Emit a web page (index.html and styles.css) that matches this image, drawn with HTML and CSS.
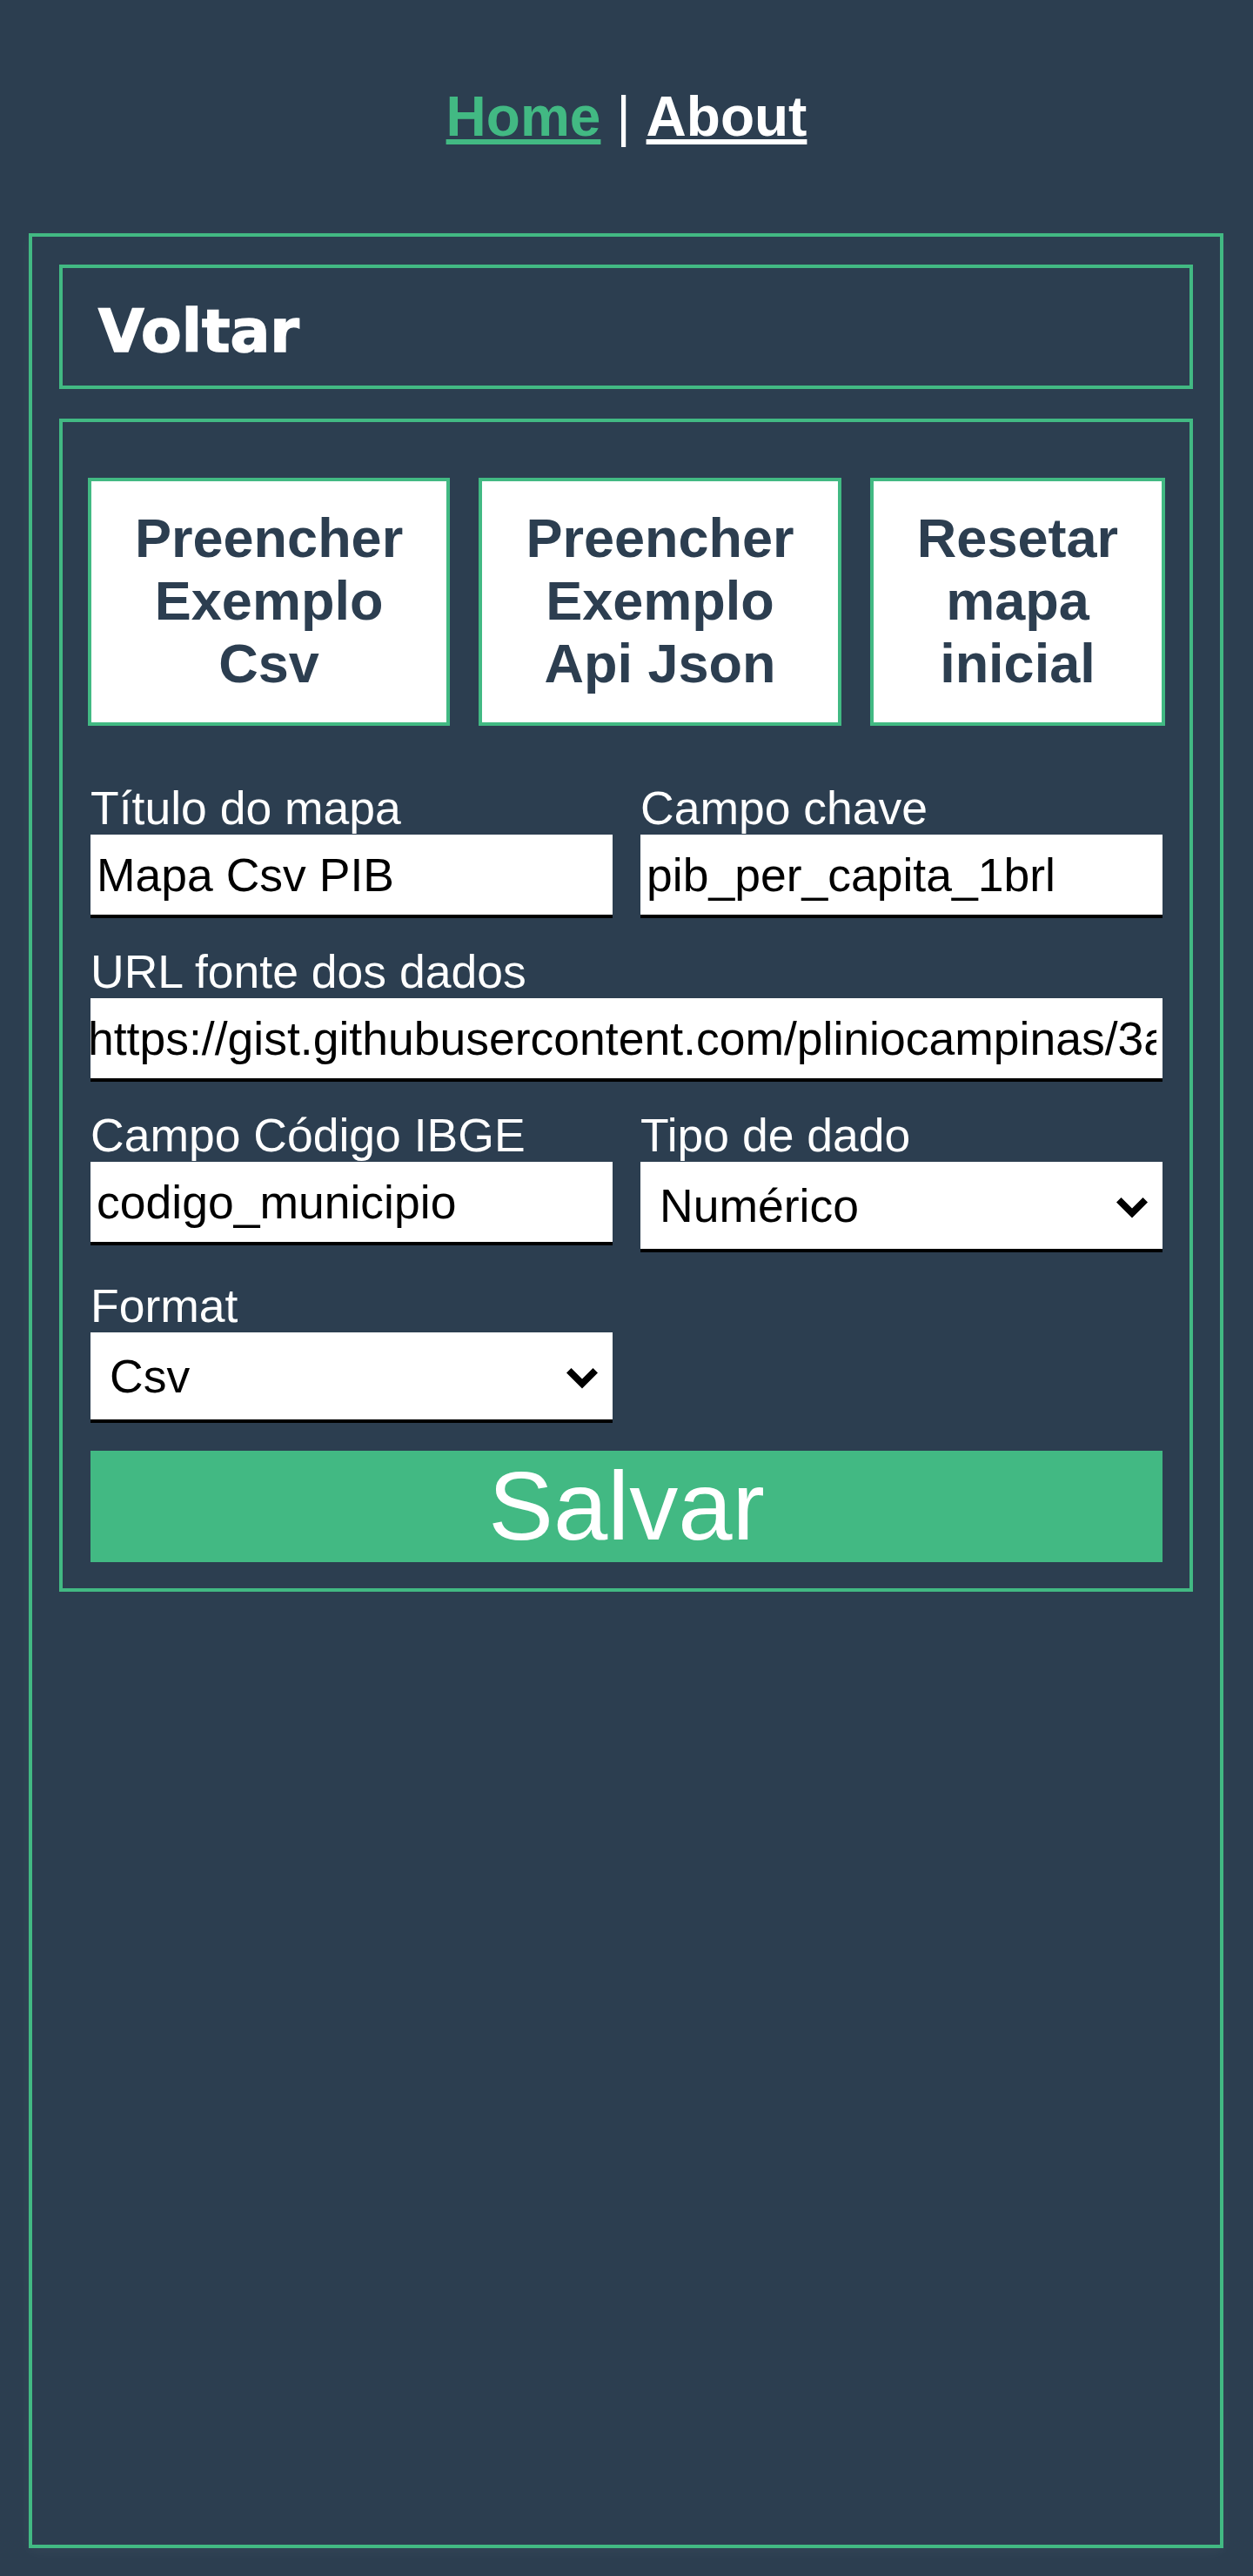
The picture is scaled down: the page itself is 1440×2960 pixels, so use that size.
FILE: index.html
```html
<!DOCTYPE html>
<html lang="pt-BR">
<head>
<meta charset="utf-8">
<title>Mapa</title>
<link rel="stylesheet" href="styles.css">
</head>
<body>
<div class="app">
  <nav class="nav">
    <a class="nav-link nav-link-active" href="#">Home</a> <span class="nav-sep">|</span> <a class="nav-link" href="#">About</a>
  </nav>
  <main class="page">
    <div class="panel back-panel">
      <h1 class="back-title">Voltar</h1>
    </div>
    <div class="panel form-panel">
      <div class="actions">
        <button class="action-btn" type="button">Preencher Exemplo Csv</button>
        <button class="action-btn" type="button">Preencher Exemplo Api Json</button>
        <button class="action-btn" type="button">Resetar mapa inicial</button>
      </div>
      <form class="fields">
        <div class="field">
          <label class="field-label">Título do mapa</label>
          <input class="field-input" type="text" value="Mapa Csv PIB">
        </div>
        <div class="field">
          <label class="field-label">Campo chave</label>
          <input class="field-input" type="text" value="pib_per_capita_1brl">
        </div>
        <div class="field field-wide">
          <label class="field-label">URL fonte dos dados</label>
          <input class="field-input field-input-scrolled" type="text" value="https://gist.githubusercontent.com/pliniocampinas/3a9e1b0c7d/raw/pib_municipios.csv">
        </div>
        <div class="field">
          <label class="field-label">Campo Código IBGE</label>
          <input class="field-input" type="text" value="codigo_municipio">
        </div>
        <div class="field">
          <label class="field-label">Tipo de dado</label>
          <div class="select-wrap">
            <select class="field-select">
              <option>Numérico</option>
              <option>Texto</option>
            </select>
            <svg class="select-chevron" viewBox="0 0 36 24" width="36" height="24" aria-hidden="true"><polygon points="0,5.5 5.5,0 18,12.5 30.5,0 36,5.5 18,23.5" fill="#000"/></svg>
          </div>
        </div>
        <div class="field">
          <label class="field-label">Format</label>
          <div class="select-wrap">
            <select class="field-select">
              <option>Csv</option>
              <option>Json</option>
            </select>
            <svg class="select-chevron" viewBox="0 0 36 24" width="36" height="24" aria-hidden="true"><polygon points="0,5.5 5.5,0 18,12.5 30.5,0 36,5.5 18,23.5" fill="#000"/></svg>
          </div>
        </div>
        <button class="save-btn field-wide" type="button">Salvar</button>
      </form>
    </div>
  </main>
</div>
</body>
</html>
```
FILE: styles.css
```css
html, body {
  margin: 0;
  padding: 0;
}

body {
  background: #2c3e50;
  font-family: "Liberation Sans", Arial, Helvetica, sans-serif;
  color: #fff;
}

.app {
  min-height: 2960px;
}

.nav {
  text-align: center;
  font-size: 64px;
  line-height: 74px;
  padding-top: 97px;
  margin-bottom: 97px;
}

.nav-link {
  font-weight: bold;
  color: #fff;
  text-decoration: underline;
}

.nav-link-active {
  color: #42b983;
}

.nav-sep {
  color: #fff;
  font-weight: normal;
}

.page {
  margin: 0 34px 0 33px;
  border: 4px solid #42b983;
  padding: 32px 31px;
  min-height: 2660px;
  box-sizing: border-box;
  box-shadow: 0 4px 16px rgba(255, 255, 255, 0.04);
}

.panel {
  border: 4px solid #42b983;
}

.back-panel {
  padding: 33px 41px 23px;
}

.back-title {
  margin: 0;
  font-family: "DejaVu Sans", "Liberation Sans", sans-serif;
  font-size: 68px;
  font-weight: bold;
  line-height: normal;
  color: #fff;
  -webkit-text-stroke: 1.5px #fff;
}

.form-panel {
  margin-top: 34px;
  padding: 64px 31px 30px 32px;
}

.actions {
  display: flex;
  justify-content: space-between;
  align-items: flex-start;
  margin: 0 -3px 65px -3px;
}

.action-btn {
  flex: none;
  width: min-content;
  background: #fff;
  border: 4px solid #42b983;
  border-radius: 0;
  padding: 29px 50px 32px;
  margin: 0;
  font-family: "Liberation Sans", Arial, sans-serif;
  font-weight: bold;
  font-size: 63px;
  line-height: normal;
  color: #2c3e50;
  text-align: center;
}

.fields {
  display: grid;
  grid-template-columns: 1fr 1fr;
  column-gap: 32px;
  row-gap: 32px;
  align-items: start;
  margin: 0;
}

.field-wide {
  grid-column: 1 / 3;
}

.field-label {
  display: block;
  font-size: 53.5px;
  line-height: 60px;
  color: #fff;
  white-space: nowrap;
}

.field-input {
  display: block;
  width: 100%;
  box-sizing: border-box;
  height: 96px;
  margin: 0;
  border: none;
  border-bottom: 4px solid #000;
  border-radius: 0;
  padding: 0 7px;
  background: #fff;
  color: #000;
  font-family: "Liberation Sans", Arial, sans-serif;
  font-size: 53.5px;
  outline: none;
}

.field-input-scrolled {
  padding-left: 0;
  text-indent: -3px;
}

.select-wrap {
  position: relative;
}

.field-select {
  display: block;
  width: 100%;
  box-sizing: border-box;
  height: 104px;
  margin: 0;
  border: none;
  border-bottom: 4px solid #000;
  border-radius: 0;
  padding: 0 70px 0 22px;
  background: #fff;
  color: #000;
  font-family: "Liberation Sans", Arial, sans-serif;
  font-size: 53.5px;
  -webkit-appearance: none;
  appearance: none;
  outline: none;
}

.select-chevron {
  position: absolute;
  right: 17px;
  top: 41px;
  pointer-events: none;
}

.save-btn {
  display: block;
  width: 100%;
  height: 128px;
  margin: 0;
  padding: 0;
  border: none;
  border-radius: 0;
  background: #42b983;
  color: #fff;
  font-family: "Liberation Sans", Arial, sans-serif;
  font-size: 112px;
  line-height: 128px;
  text-align: center;
}
```
